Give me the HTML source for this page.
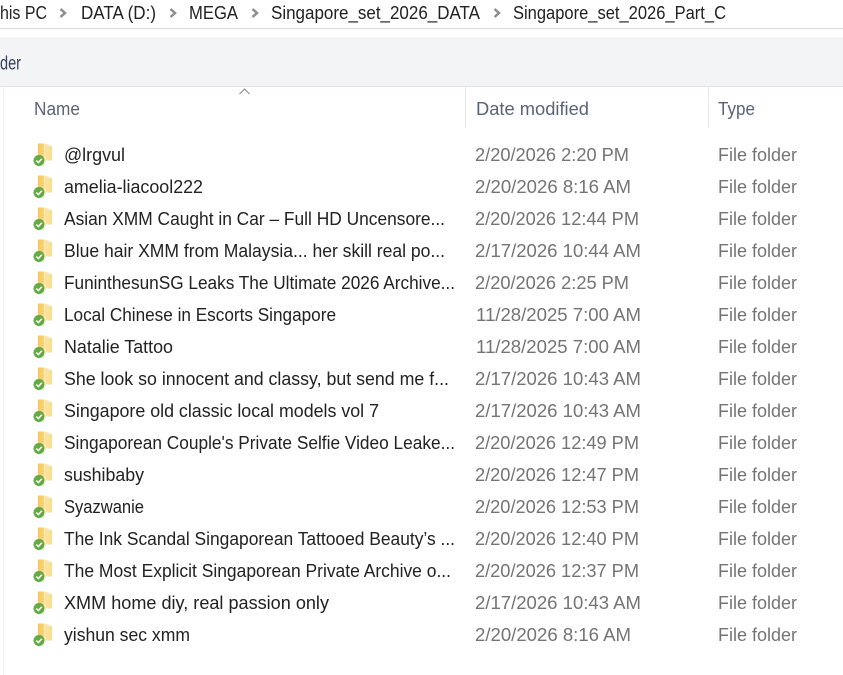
<!DOCTYPE html>
<html><head><meta charset="utf-8"><style>
html,body{margin:0;padding:0;background:#fff;width:843px;height:675px;overflow:hidden}
svg{display:block}
text{font-family:"Liberation Sans",sans-serif;font-size:18px}
.b{fill:#222}.h{fill:#5a6478}.d{fill:#747474}.n{fill:#222}.t{fill:#747474}
</style></head><body>
<svg width="843" height="675" viewBox="0 0 843 675" xmlns="http://www.w3.org/2000/svg" xmlns:xlink="http://www.w3.org/1999/xlink">
<defs>
<linearGradient id="g" x1="0" y1="0" x2="1" y2="0"><stop offset="0" stop-color="#f3c95f"/><stop offset=".4" stop-color="#f7d27a"/><stop offset=".45" stop-color="#fde6a8"/><stop offset="1" stop-color="#fbdc8e"/></linearGradient>
<g id="f">
<path d="M38 143.500H44.500L52 146.500V160.500H38Z" fill="url(#g)"/>
<circle cx="39" cy="160.500" r="5.500" fill="#62ab45"/>
<path d="M36.300 160.600L38.400 162.600L41.900 158.700" fill="none" stroke="#fff" stroke-width="1.500"/>
</g>
</defs>
<rect width="843" height="675" fill="#fff"/>
<rect x="0" y="28" width="843" height="1" fill="#d8d8d8"/>
<rect x="0" y="37" width="843" height="49" fill="#f3f4f6"/>
<rect x="0" y="86" width="843" height="1" fill="#e3e3e3"/>
<rect x="3" y="87" width="1" height="588" fill="#f0f0f0"/>
<rect x="465" y="87" width="1" height="41" fill="#e6e8eb"/>
<rect x="708" y="87" width="1" height="41" fill="#e6e8eb"/>

<text class="b" x="0" y="19" textLength="47" lengthAdjust="spacingAndGlyphs">his PC</text>
<text class="b" x="81" y="19" textLength="75" lengthAdjust="spacingAndGlyphs">DATA (D:)</text>
<text class="b" x="189" y="19" textLength="49" lengthAdjust="spacingAndGlyphs">MEGA</text>
<text class="b" x="271" y="19" textLength="209" lengthAdjust="spacingAndGlyphs">Singapore_set_2026_DATA</text>
<text class="b" x="513" y="19" textLength="213" lengthAdjust="spacingAndGlyphs">Singapore_set_2026_Part_C</text>
<g fill="none" stroke="#8e8e8e" stroke-width="2.500">
<path d="M60.500 9L65 13L60.500 17"/><path d="M170.500 9L175 13L170.500 17"/><path d="M252.500 9L257 13L252.500 17"/><path d="M494.500 9L499 13L494.500 17"/>
</g>
<text x="0" y="69.500" textLength="21" lengthAdjust="spacingAndGlyphs" fill="#33425a" style="font-size:19px">der</text>
<path d="M239.500 94L244.500 89L249.500 94" fill="none" stroke="#8a8a8a" stroke-width="1"/>
<text class="h" x="34" y="115" textLength="46" lengthAdjust="spacingAndGlyphs">Name</text>
<text class="h" x="476" y="115" textLength="113" lengthAdjust="spacingAndGlyphs">Date modified</text>
<text class="h" x="718" y="115" textLength="37" lengthAdjust="spacingAndGlyphs">Type</text>

<use xlink:href="#f" y="0"/><text class="n" x="64" y="161" textLength="61" lengthAdjust="spacingAndGlyphs">@lrgvul</text><text class="d" x="475" y="161" textLength="154" lengthAdjust="spacingAndGlyphs">2/20/2026 2:20 PM</text><text class="t" x="718" y="161" textLength="79" lengthAdjust="spacingAndGlyphs">File folder</text>
<use xlink:href="#f" y="32"/><text class="n" x="64" y="193" textLength="139" lengthAdjust="spacingAndGlyphs">amelia-liacool222</text><text class="d" x="475" y="193" textLength="156" lengthAdjust="spacingAndGlyphs">2/20/2026 8:16 AM</text><text class="t" x="718" y="193" textLength="79" lengthAdjust="spacingAndGlyphs">File folder</text>
<use xlink:href="#f" y="64"/><text class="n" x="64" y="225" textLength="381" lengthAdjust="spacingAndGlyphs">Asian XMM Caught in Car – Full HD Uncensore...</text><text class="d" x="475" y="225" textLength="164" lengthAdjust="spacingAndGlyphs">2/20/2026 12:44 PM</text><text class="t" x="718" y="225" textLength="79" lengthAdjust="spacingAndGlyphs">File folder</text>
<use xlink:href="#f" y="96"/><text class="n" x="64" y="257" textLength="381" lengthAdjust="spacingAndGlyphs">Blue hair XMM from Malaysia... her skill real po...</text><text class="d" x="475" y="257" textLength="166" lengthAdjust="spacingAndGlyphs">2/17/2026 10:44 AM</text><text class="t" x="718" y="257" textLength="79" lengthAdjust="spacingAndGlyphs">File folder</text>
<use xlink:href="#f" y="128"/><text class="n" x="64" y="289" textLength="391" lengthAdjust="spacingAndGlyphs">FuninthesunSG Leaks The Ultimate 2026 Archive...</text><text class="d" x="475" y="289" textLength="154" lengthAdjust="spacingAndGlyphs">2/20/2026 2:25 PM</text><text class="t" x="718" y="289" textLength="79" lengthAdjust="spacingAndGlyphs">File folder</text>
<use xlink:href="#f" y="160"/><text class="n" x="64" y="321" textLength="272" lengthAdjust="spacingAndGlyphs">Local Chinese in Escorts Singapore</text><text class="d" x="476" y="321" textLength="165" lengthAdjust="spacingAndGlyphs">11/28/2025 7:00 AM</text><text class="t" x="718" y="321" textLength="79" lengthAdjust="spacingAndGlyphs">File folder</text>
<use xlink:href="#f" y="192"/><text class="n" x="64" y="353" textLength="109" lengthAdjust="spacingAndGlyphs">Natalie Tattoo</text><text class="d" x="476" y="353" textLength="165" lengthAdjust="spacingAndGlyphs">11/28/2025 7:00 AM</text><text class="t" x="718" y="353" textLength="79" lengthAdjust="spacingAndGlyphs">File folder</text>
<use xlink:href="#f" y="224"/><text class="n" x="64" y="385" textLength="385" lengthAdjust="spacingAndGlyphs">She look so innocent and classy, but send me f...</text><text class="d" x="475" y="385" textLength="166" lengthAdjust="spacingAndGlyphs">2/17/2026 10:43 AM</text><text class="t" x="718" y="385" textLength="79" lengthAdjust="spacingAndGlyphs">File folder</text>
<use xlink:href="#f" y="256"/><text class="n" x="64" y="417" textLength="315" lengthAdjust="spacingAndGlyphs">Singapore old classic local models vol 7</text><text class="d" x="475" y="417" textLength="166" lengthAdjust="spacingAndGlyphs">2/17/2026 10:43 AM</text><text class="t" x="718" y="417" textLength="79" lengthAdjust="spacingAndGlyphs">File folder</text>
<use xlink:href="#f" y="288"/><text class="n" x="64" y="449" textLength="391" lengthAdjust="spacingAndGlyphs">Singaporean Couple's Private Selfie Video Leake...</text><text class="d" x="475" y="449" textLength="164" lengthAdjust="spacingAndGlyphs">2/20/2026 12:49 PM</text><text class="t" x="718" y="449" textLength="79" lengthAdjust="spacingAndGlyphs">File folder</text>
<use xlink:href="#f" y="320"/><text class="n" x="64" y="481" textLength="80" lengthAdjust="spacingAndGlyphs">sushibaby</text><text class="d" x="475" y="481" textLength="164" lengthAdjust="spacingAndGlyphs">2/20/2026 12:47 PM</text><text class="t" x="718" y="481" textLength="79" lengthAdjust="spacingAndGlyphs">File folder</text>
<use xlink:href="#f" y="352"/><text class="n" x="64" y="513" textLength="80" lengthAdjust="spacingAndGlyphs">Syazwanie</text><text class="d" x="475" y="513" textLength="164" lengthAdjust="spacingAndGlyphs">2/20/2026 12:53 PM</text><text class="t" x="718" y="513" textLength="79" lengthAdjust="spacingAndGlyphs">File folder</text>
<use xlink:href="#f" y="384"/><text class="n" x="64" y="545" textLength="391" lengthAdjust="spacingAndGlyphs">The Ink Scandal Singaporean Tattooed Beauty’s ...</text><text class="d" x="475" y="545" textLength="164" lengthAdjust="spacingAndGlyphs">2/20/2026 12:40 PM</text><text class="t" x="718" y="545" textLength="79" lengthAdjust="spacingAndGlyphs">File folder</text>
<use xlink:href="#f" y="416"/><text class="n" x="64" y="577" textLength="387" lengthAdjust="spacingAndGlyphs">The Most Explicit Singaporean Private Archive o...</text><text class="d" x="475" y="577" textLength="164" lengthAdjust="spacingAndGlyphs">2/20/2026 12:37 PM</text><text class="t" x="718" y="577" textLength="79" lengthAdjust="spacingAndGlyphs">File folder</text>
<use xlink:href="#f" y="448"/><text class="n" x="64" y="609" textLength="265" lengthAdjust="spacingAndGlyphs">XMM home diy, real passion only</text><text class="d" x="475" y="609" textLength="166" lengthAdjust="spacingAndGlyphs">2/17/2026 10:43 AM</text><text class="t" x="718" y="609" textLength="79" lengthAdjust="spacingAndGlyphs">File folder</text>
<use xlink:href="#f" y="480"/><text class="n" x="64" y="641" textLength="126" lengthAdjust="spacingAndGlyphs">yishun sec xmm</text><text class="d" x="475" y="641" textLength="156" lengthAdjust="spacingAndGlyphs">2/20/2026 8:16 AM</text><text class="t" x="718" y="641" textLength="79" lengthAdjust="spacingAndGlyphs">File folder</text>
</svg>
</body></html>
